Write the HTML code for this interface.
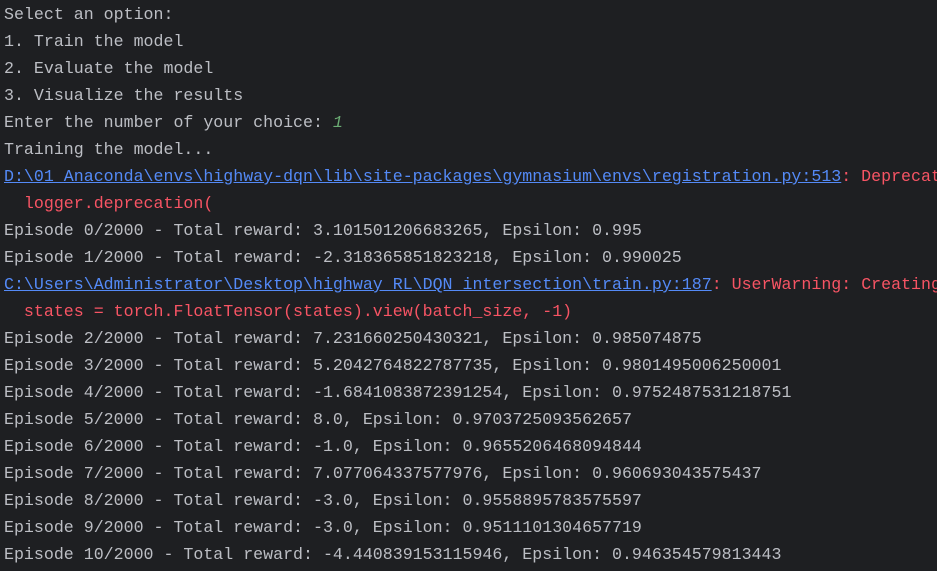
<!DOCTYPE html>
<html><head><meta charset="utf-8"><style>
html,body{margin:0;padding:0;background:#1e1f22;width:937px;height:571px;overflow:hidden}
pre{margin:0;padding:0 0 0 4px;width:933px;overflow:hidden;font-family:"Liberation Mono",monospace;font-size:16.63px;line-height:27px;color:#bcbec4;white-space:pre;position:relative;top:1px}
.l{color:#548af7;text-decoration:underline}
.r{color:#f75464}
.g{color:#6aab73;font-style:italic}
</style></head><body><pre>Select an option:
1. Train the model
2. Evaluate the model
3. Visualize the results
Enter the number of your choice: <span class="g">1</span>
Training the model...
<span class="l">D:\01_Anaconda\envs\highway-dqn\lib\site-packages\gymnasium\envs\registration.py:513</span><span class="r">: Deprecati</span>
<span class="r">  logger.deprecation(</span>
Episode 0/2000 - Total reward: 3.101501206683265, Epsilon: 0.995
Episode 1/2000 - Total reward: -2.318365851823218, Epsilon: 0.990025
<span class="l">C:\Users\Administrator\Desktop\highway_RL\DQN_intersection\train.py:187</span><span class="r">: UserWarning: Creating</span>
<span class="r">  states = torch.FloatTensor(states).view(batch_size, -1)</span>
Episode 2/2000 - Total reward: 7.231660250430321, Epsilon: 0.985074875
Episode 3/2000 - Total reward: 5.2042764822787735, Epsilon: 0.9801495006250001
Episode 4/2000 - Total reward: -1.6841083872391254, Epsilon: 0.9752487531218751
Episode 5/2000 - Total reward: 8.0, Epsilon: 0.9703725093562657
Episode 6/2000 - Total reward: -1.0, Epsilon: 0.9655206468094844
Episode 7/2000 - Total reward: 7.077064337577976, Epsilon: 0.960693043575437
Episode 8/2000 - Total reward: -3.0, Epsilon: 0.9558895783575597
Episode 9/2000 - Total reward: -3.0, Epsilon: 0.9511101304657719
Episode 10/2000 - Total reward: -4.440839153115946, Epsilon: 0.946354579813443</pre></body></html>
